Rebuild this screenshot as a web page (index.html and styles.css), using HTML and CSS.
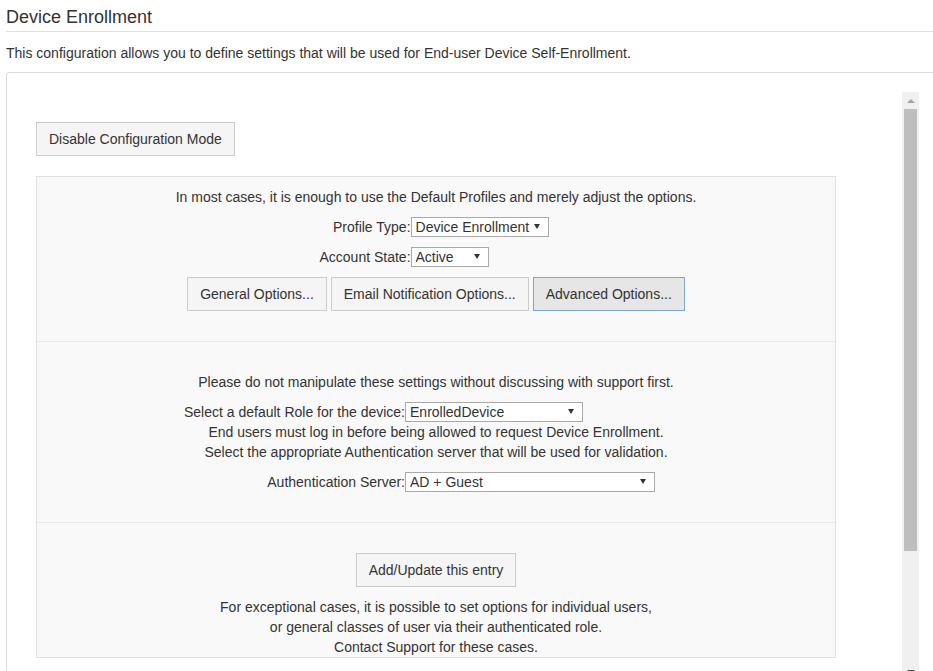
FILE: index.html
```html
<!DOCTYPE html>
<html lang="en">
<head>
<meta charset="utf-8">
<title>Device Enrollment</title>
<link rel="stylesheet" href="styles.css">
</head>
<body>
<div class="page">
  <h1 class="title">Device Enrollment</h1>
  <p class="intro">This configuration allows you to define settings that will be used for End-user Device Self-Enrollment.</p>
  <div class="frame">
    <div class="scroll-area">
      <div class="scroll-content">
        <button class="btn" type="button">Disable Configuration Mode</button>
        <div class="panel">
          <div class="section s-profile">
            <p class="line">In most cases, it is enough to use the Default Profiles and merely adjust the options.</p>
            <div class="form-grid grid-narrow">
              <label class="lbl">Profile Type:</label>
              <span class="sel w-profile"><select><option>Device Enrollment</option></select></span>
              <label class="lbl">Account State:</label>
              <span class="sel w-state"><select><option>Active</option></select></span>
            </div>
            <div class="btn-row">
              <button class="btn" type="button">General Options...</button>
              <button class="btn" type="button">Email Notification Options...</button>
              <button class="btn btn-focus" type="button">Advanced Options...</button>
            </div>
          </div>
          <div class="section s-role">
            <p class="line">Please do not manipulate these settings without discussing with support first.</p>
            <div class="form-grid grid-wide">
              <label class="lbl">Select a default Role for the device:</label>
              <span class="sel w-role"><select><option>EnrolledDevice</option></select></span>
              <p class="span-line">End users must log in before being allowed to request Device Enrollment.</p>
              <p class="span-line">Select the appropriate Authentication server that will be used for validation.</p>
              <label class="lbl spaced">Authentication Server:</label>
              <span class="sel w-auth spaced"><select><option>AD + Guest</option></select></span>
            </div>
          </div>
          <div class="section s-update">
            <button class="btn" type="button">Add/Update this entry</button>
            <div class="notes">
              <p class="line">For exceptional cases, it is possible to set options for individual users,</p>
              <p class="line">or general classes of user via their authenticated role.</p>
              <p class="line">Contact Support for these cases.</p>
            </div>
          </div>
        </div>
      </div>
      <div class="vscroll" aria-hidden="true">
        <span class="sb-btn sb-up"></span>
        <span class="sb-thumb"></span>
        <span class="sb-track"></span>
        <span class="sb-btn sb-down"></span>
      </div>
    </div>
  </div>
</div>
</body>
</html>
```
FILE: styles.css
```css
html {
  overflow: hidden;
}

body {
  margin: 0;
  background: #fff;
  color: #333;
  font-family: "Liberation Sans", Arial, sans-serif;
  font-size: 14px;
  line-height: 20px;
}

.page {
  padding-left: 6px;
}

.title {
  margin: 0;
  padding: 7px 0 4px;
  font-size: 18px;
  font-weight: normal;
  line-height: 20px;
  border-bottom: 1px solid #e0e0e0;
}

.intro {
  margin: 11px 0 9px 0;
}

.frame {
  border: 1px solid #dcdcdc;
  border-right: none;
  border-radius: 4px 0 0 0;
  padding: 19px 14px 0 19px;
}

.scroll-area {
  display: flex;
  height: 589px;
  overflow: hidden;
}

.scroll-content {
  flex: 1;
  min-width: 0;
  padding: 30px 0 0 10px;
  overflow: hidden;
}

/* vertical scrollbar of the inner scroll area */
.vscroll {
  flex: 0 0 17px;
  display: flex;
  flex-direction: column;
  background: #f0f0f0;
}

.sb-btn {
  flex: 0 0 17px;
  display: flex;
  justify-content: center;
}

.sb-btn::before {
  content: "";
  width: 0;
  height: 0;
  border-left: 4px solid transparent;
  border-right: 4px solid transparent;
}

.sb-up::before {
  margin-top: 7px;
  border-bottom: 4px solid #a3a3a3;
}

.sb-down::before {
  margin-top: 6px;
  border-top: 4px solid #505050;
}

.sb-thumb {
  flex: 0 0 442px;
  margin: 0 2px;
  background: #bebebe;
}

.sb-track {
  flex: 1;
}

.btn {
  font: inherit;
  color: #333;
  line-height: 20px;
  padding: 6px 12px;
  margin: 0;
  background: #f5f5f5;
  border: 1px solid #cccccc;
  border-radius: 0;
  cursor: pointer;
}

.btn-focus {
  background: #e6e6e6;
  border-color: #7ea6de;
}

.btn-row {
  display: flex;
  gap: 4px;
}

.panel {
  box-sizing: border-box;
  width: 800px;
  margin-top: 20px;
  background: #f9f9f9;
  border: 1px solid #e1e1e1;
}

.section {
  display: flex;
  flex-direction: column;
  align-items: center;
}

.section + .section {
  border-top: 1px solid #e8e8e8;
}

.s-profile {
  padding: 10px 0 30px;
  gap: 10px;
}

.s-role {
  padding: 30px 0 30px;
  gap: 10px;
}

.s-update {
  padding: 30px 0 0;
  gap: 10px;
}

.line {
  margin: 0;
  text-align: center;
}

.notes {
  display: flex;
  flex-direction: column;
  align-items: center;
}

.form-grid {
  display: grid;
  row-gap: 10px;
  align-items: center;
}

.grid-narrow {
  grid-template-columns: max-content 142px;
}

.grid-wide {
  grid-template-columns: max-content 283px;
  row-gap: 0;
}

.lbl {
  justify-self: end;
}

.span-line {
  grid-column: 1 / -1;
  margin: 0;
  text-align: center;
}

.spaced {
  margin-top: 10px;
}

.sel {
  position: relative;
  display: inline-block;
  justify-self: start;
  height: 20px;
}

.sel select {
  -webkit-appearance: none;
  appearance: none;
  box-sizing: border-box;
  display: block;
  width: 100%;
  height: 20px;
  margin: 0;
  padding: 0 16px 0 4px;
  font: inherit;
  line-height: 18px;
  color: #333;
  background: #fff;
  border: 1px solid #a9a9a9;
  border-radius: 0;
}

.sel::after {
  content: "";
  position: absolute;
  right: 9px;
  top: 7px;
  width: 0;
  height: 0;
  border-left: 3px solid transparent;
  border-right: 3px solid transparent;
  border-top: 5px solid #333;
  pointer-events: none;
}

.w-profile { width: 138px; }
.w-state { width: 78px; }
.w-role { width: 178px; }
.w-auth { width: 250px; }
```
